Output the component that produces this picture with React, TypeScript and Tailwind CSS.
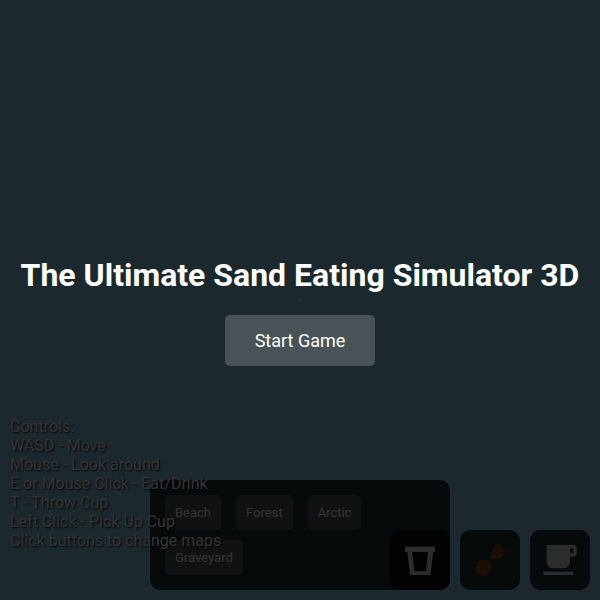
import React, { useState } from 'react';

const MAPS = ['Beach', 'Forest', 'Arctic', 'Graveyard'];

const CONTROLS = [
    'WASD - Move',
    'Mouse - Look around',
    'E or Mouse Click - Eat/Drink',
    'T - Throw Cup',
    'Left Click - Pick Up Cup',
    'Click buttons to change maps',
];

const slotClass = 'flex size-[60px] items-center justify-center rounded-[10px] bg-black/75';

function CupIcon() {
    return (
        <svg viewBox="0 0 24 24" className="size-10 fill-[#ddd]">
            <path fillRule="evenodd" d="M3 4h18v3.2h-1.1L18.3 21H6L4.4 7.2H3zM7.3 7.2 8.6 18.8h6.9L16.8 7.2z" />
        </svg>
    );
}

function DrumstickIcon() {
    return (
        <svg viewBox="0 0 24 24" className="size-10 fill-[#8b4513]">
            <path d="M15 3.5c1.2-1.4 3.6-1 4 .9 2 .4 2.6 2.6 1.3 4l-2.2 2.2c-1 1-2.4 1.2-3.6.7l-1.3.7-1-1 .9-1.6c-.5-1.2-.2-2.5.6-3.4z" />
            <path d="M6.2 12.2h4l2.6 1.2-.4 3.8c-.2 2.2-1.6 4-3.8 4.2-1.4.2-2.4-.2-3.2-1-1.6.2-2.8-1-2.6-2.6.1-.9.6-1.5 1.3-1.8-.2-1.9.4-3.3 2.1-3.8z" />
        </svg>
    );
}

function CoffeeIcon() {
    return (
        <svg viewBox="0 0 24 24" className="size-10 fill-[#ddd]">
            <path d="M20 3H4v10c0 2.21 1.79 4 4 4h6c2.21 0 4-1.79 4-4v-3h2c1.11 0 2-.9 2-2V5c0-1.11-.89-2-2-2zm0 5h-2V5h2v3zM2 21h18v-2H2v2z" />
        </svg>
    );
}

export default function App() {
    const [started, setStarted] = useState(false);
    const [map, setMap] = useState('Beach');

    return (
        <main
            data-map={map}
            className="relative min-h-screen overflow-hidden bg-[#87ceeb] font-[Roboto,sans-serif] text-white"
        >
            {/* Crosshair */}
            <div className="absolute top-1/2 left-1/2 size-1 -translate-1/2 rounded-full bg-white/50" />

            {/* Map selector */}
            <nav className="absolute bottom-2.5 left-1/4 flex w-1/2 flex-wrap gap-x-[15px] gap-y-2.5 rounded-[10px] bg-black/75 p-[15px]">
                {MAPS.map((name) => (
                    <button
                        key={name}
                        onClick={() => setMap(name)}
                        className="rounded-[5px] bg-[#555] px-2.5 py-2 text-[13px] leading-[19px]"
                    >
                        {name}
                    </button>
                ))}
            </nav>

            <div className="absolute bottom-[50px] left-2.5 text-base leading-[19px] text-shadow-[1px_1px_2px_#000]">
                <p>Controls:</p>
                {CONTROLS.map((line) => (
                    <p key={line}>{line}</p>
                ))}
            </div>

            {/* Inventory */}
            <div className="absolute right-2.5 bottom-2.5 flex gap-2.5">
                <button aria-label="Cup" className={slotClass}><CupIcon /></button>
                <button aria-label="Food" className={slotClass}><DrumstickIcon /></button>
                <button aria-label="Coffee" className={slotClass}><CoffeeIcon /></button>
            </div>

            {!started && (
                <div className="absolute inset-0 flex flex-col items-center justify-center bg-black/80">
                    <h1 className="my-[21px] text-center text-[32px] leading-[38px] font-bold">
                        The Ultimate Sand Eating Simulator 3D
                    </h1>
                    <button
                        onClick={() => setStarted(true)}
                        className="rounded-[5px] bg-white/20 px-[30px] py-[15px] text-lg leading-[21px]"
                    >
                        Start Game
                    </button>
                </div>
            )}
        </main>
    );
}
